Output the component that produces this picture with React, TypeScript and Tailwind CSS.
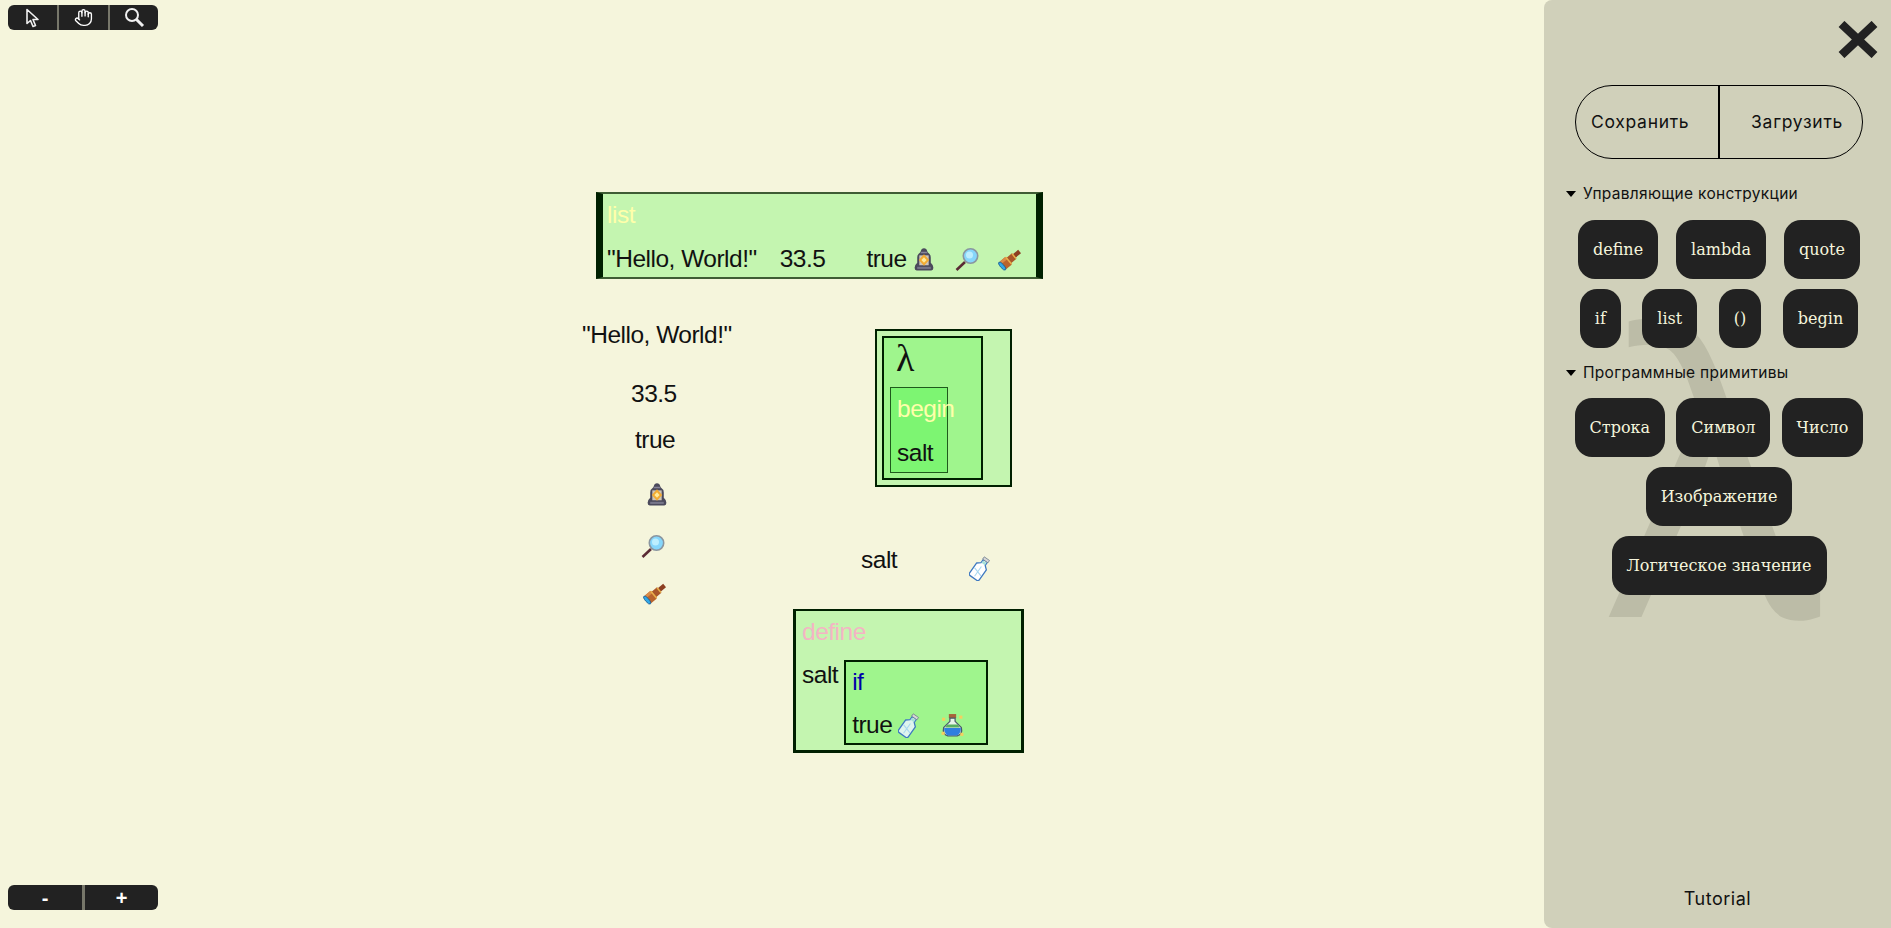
import React from "react";
import { Hand } from "lucide-react";

const sans = { fontFamily: '"Liberation Sans", Arial, sans-serif' };

function Lantern({ className = "" }: { className?: string }) {
  return (
    <svg className={className} width="20" height="24" viewBox="0 0 19 23">
      <path d="M7 2.500Q9.500 0 12 2.500l1 2.500q3 2 3 5v5q2.500 2 2.500 5 0 2.500-2 2.500h-14q-2 0-2-2.500 0-3 2.500-5v-5q0-3 3-5z" fill="#4b4a5c" />
      <path d="M7 4.500h5l.8 1.500h-6.600z" fill="#86859a" />
      <path d="M5 8h9v9.500H5z" fill="#cfc6b8" />
      <path d="M9.500 7l5 5.500-5 5.500-5-5.500z" fill="#f2ab32" />
      <path d="M9.500 9.800l2.500 2.700-2.500 2.700-2.500-2.700z" fill="#ffeb9c" />
      <rect x="3" y="19" width="13" height="2" fill="#77768a" />
    </svg>
  );
}

function Magnifier({ className = "" }: { className?: string }) {
  return (
    <svg className={className} width="24" height="23" viewBox="0 0 24 23">
      <path d="M10 14L1.500 22" stroke="#5a2a34" strokeWidth="2.500" />
      <circle cx="15.500" cy="8" r="7.200" fill="#86d6fb" stroke="#8a96a0" strokeWidth="1.600" />
      <circle cx="14.500" cy="7" r="3.500" fill="#bdeefe" />
    </svg>
  );
}

function Telescope({ className = "" }: { className?: string }) {
  return (
    <svg className={className} width="24" height="23" viewBox="0 0 24 23">
      <g transform="rotate(-40 12 11.500)">
        <rect x="17.500" y="9.300" width="7" height="4.400" fill="#8c3f22" />
        <rect x="10.500" y="8" width="7" height="7" fill="#a9562a" />
        <rect x="2.500" y="6.500" width="8" height="10" rx="1" fill="#b9642d" />
        <rect x="2.500" y="6.500" width="8" height="3" fill="#d88a48" />
        <rect x="9.500" y="7" width="1.500" height="9" fill="#e9b04a" />
        <rect x="16.500" y="8.500" width="1.500" height="6" fill="#e9b04a" />
        <ellipse cx="1.800" cy="11.500" rx="1.800" ry="5" fill="#2fa8e8" stroke="#1d5a90" strokeWidth="0.800" />
      </g>
    </svg>
  );
}

function Bottle({ className = "", tint = "#ffffff" }: { className?: string; tint?: string }) {
  return (
    <svg className={className} width="22" height="25" viewBox="0 0 22 25">
      <g transform="rotate(35 11 12.500)">
        <path d="M8.500 3h5v4l3.500 3v12q0 2-2 2H7q-2 0-2-2V10l3.500-3z" fill={tint} stroke="#3d78c0" strokeWidth="1.300" strokeLinejoin="round" />
        <rect x="7.800" y="0.500" width="6.400" height="2.800" fill="#d8d8d8" stroke="#6a7a8a" strokeWidth="0.700" />
        <path d="M6 15l10 3M11 10v12" stroke="#a9d8f0" strokeWidth="1.100" fill="none" />
        <path d="M9 4h4v3H9z" fill="#a8e0d8" />
      </g>
    </svg>
  );
}

function Potion({ className = "" }: { className?: string }) {
  return (
    <svg className={className} width="23" height="25" viewBox="0 0 21 24">
      <rect x="7" y="1" width="7" height="4" fill="#a8623a" />
      <path d="M8 5h5v3l6 6q1.500 6-4 8H6q-5.500-2-4-8l6-6z" fill="#e8f4e8" stroke="#4a5a6a" strokeWidth="1.200" />
      <path d="M2.500 14.500h16q.5 5-3.500 7H6q-4-2-3.500-7z" fill="#2f7fe0" />
      <path d="M5.500 11h10l2 3h-14z" fill="#58b060" />
      <rect x="0.500" y="4.500" width="3" height="3" fill="#f4d060" />
      <rect x="17" y="2.500" width="3" height="3" fill="#f4d060" />
      <rect x="0" y="18" width="3" height="3" fill="#f4d060" />
      <rect x="18" y="19" width="3" height="3" fill="#f4d060" />
    </svg>
  );
}

function Txt({ children, className = "" }: { children: React.ReactNode; className?: string }) {
  return (
    <div className={"text-[24.5px] tracking-[-0.5px] leading-[28px] whitespace-nowrap text-[#111] " + className} style={sans}>
      {children}
    </div>
  );
}

function Btn({ children }: { children: React.ReactNode }) {
  return (
    <button className="h-[59px] px-[15px] rounded-[17px] bg-[#222222] text-[#f5f5dc] text-[16px] font-['DejaVu_Serif',serif] whitespace-nowrap">
      {children}
    </button>
  );
}

function Header({ children, className = "" }: { children: React.ReactNode; className?: string }) {
  return (
    <div className={"flex items-center h-[24px] ml-[-9px] text-[15.5px] tracking-[0.3px] text-[#111] font-['Inter',sans-serif] " + className}>
      <span className="w-0 h-0 mr-[7px] border-x-[5.5px] border-x-transparent border-t-[6px] border-t-black" />
      {children}
    </div>
  );
}

export default function App() {
  return (
    <div className="flex h-screen w-full overflow-hidden bg-[#f5f5dc]">
      <main className="relative flex-1">
        <div className="absolute left-[8px] top-[5px] flex h-[25px] w-[150px] overflow-hidden rounded-[6px] bg-[#222222] text-white">
          <div className="flex w-[49px] items-center justify-center">
            <svg width="15" height="20" viewBox="0 0 15 20" fill="none">
              <path d="M2 1.500v14l3.500-3 2.500 6 2.500-1-2.500-6h5z" fill="#222" stroke="#f0f0f0" strokeWidth="1.600" strokeLinejoin="round" />
            </svg>
          </div>
          <div className="flex w-[53px] items-center justify-center border-x-2 border-[#77776a]">
            <Hand size={19} strokeWidth={1.7} />
          </div>
          <div className="flex flex-1 items-center justify-center">
            <svg width="21" height="21" viewBox="0 0 21 21" fill="none">
              <circle cx="8" cy="8" r="6" stroke="#f0f0f0" strokeWidth="2" />
              <path d="M12.500 12.500L19 19" stroke="#f0f0f0" strokeWidth="3" />
            </svg>
          </div>
        </div>

        <div className="absolute left-[596px] top-[192px] h-[87px] w-[447px] border-y-2 border-x-[7px] border-y-[#3f5c34] border-x-[#002000] bg-[#c4f5b0] pl-[4px] pt-[7px]">
          <Txt className="!text-[#ffffaa]">list</Txt>
          <div className="mt-[16px] flex items-center">
            <Txt>"Hello, World!"</Txt>
            <Txt className="ml-[23px]">33.5</Txt>
            <Txt className="ml-[41px]">true</Txt>
            <Lantern className="ml-[7px]" />
            <Magnifier className="ml-[21px]" />
            <Telescope className="ml-[19px]" />
          </div>
        </div>

        <Txt className="absolute left-[582px] top-[321px]">"Hello, World!"</Txt>
        <Txt className="absolute left-[631px] top-[380px]">33.5</Txt>
        <Txt className="absolute left-[635px] top-[426px]">true</Txt>
        <Lantern className="absolute left-[647px] top-[482px]" />
        <Magnifier className="absolute left-[641px] top-[535px]" />
        <Telescope className="absolute left-[643px] top-[582px]" />

        <div className="absolute left-[875px] top-[329px] h-[158px] w-[137px] border-2 border-[#002000] bg-[#c4f5b0] pl-[5px] pt-[5px]">
          <div className="h-[144px] w-[101px] border-2 border-[#002000] bg-[#9ff58d] pl-[6px]">
            <div className="flex h-[49px] items-center pb-[9px] pl-[6px] text-[38px] leading-none text-[#111] font-['Liberation_Serif',serif]">λ</div>
            <div className="h-[86px] w-[58px] border border-[#1f5a1c] bg-[#7df572] pl-[6px] pt-[7px]">
              <Txt className="!text-[#ffffaa]">begin</Txt>
              <Txt className="mt-[16px]">salt</Txt>
            </div>
          </div>
        </div>

        <Txt className="absolute left-[861px] top-[546px]">salt</Txt>
        <Bottle className="absolute left-[969px] top-[556px]" />

        <div className="absolute left-[793px] top-[609px] h-[144px] w-[231px] border-x-[3px] border-t-2 border-b-[3px] border-[#002000] bg-[#c4f5b0] pl-[6px] pt-[7px]">
          <Txt className="!text-[#f4b4c4]">define</Txt>
          <div className="mt-[14px] flex items-start">
            <Txt className="mt-[1px]">salt</Txt>
            <div className="ml-[6px] h-[85px] w-[144px] border-2 border-[#002000] bg-[#9ff58d] pl-[6px] pt-[6px]">
              <Txt className="!text-[#0000aa]">if</Txt>
              <div className="mt-[15px] flex items-center">
                <Txt>true</Txt>
                <Bottle className="ml-[6px]" tint="#dff5ee" />
                <Potion className="ml-[21px]" />
              </div>
            </div>
          </div>
        </div>

        <div className="absolute left-[8px] top-[885px] flex h-[25px] w-[150px] overflow-hidden rounded-[6px] bg-[#222222] text-white font-['Liberation_Sans',sans-serif] text-[20px] font-bold">
          <div className="flex w-[74px] items-center justify-center">-</div>
          <div className="w-[3px] bg-[#77776a]" />
          <div className="flex flex-1 items-center justify-center">+</div>
        </div>
      </main>

      <aside className="relative flex h-full w-[347px] shrink-0 flex-col overflow-hidden rounded-l-[8px] bg-[#d0d0ba] pl-[31px]">
        <div className="pointer-events-none absolute left-[67px] top-[271px] text-[390px] font-medium leading-none text-[#bcbca7] font-['Open_Sans',sans-serif]">λ</div>

        <div className="relative flex flex-col">
          <div className="flex justify-end pr-[13px] pt-[21px]">
            <svg width="40" height="37" viewBox="0 0 40 37">
              <path d="M3.500 3L36.500 34M36.500 3L3.500 34" stroke="#222222" strokeWidth="8.500" />
            </svg>
          </div>

          <div className="mt-[27px] flex h-[74px] w-[288px] rounded-full border border-black text-[17.5px] tracking-[0.7px] text-[#111] font-['Inter',sans-serif]">
            <div className="flex w-[142px] items-center pl-[15px]">Сохранить</div>
            <div className="flex flex-1 items-center justify-end border-l-2 border-black pr-[19px]">Загрузить</div>
          </div>

          <Header className="mt-[23px]">Управляющие конструкции</Header>
          <div className="ml-[-6px] mt-[14px] flex w-[300px] flex-col gap-[10px]">
            <div className="flex justify-around">
              <Btn>define</Btn>
              <Btn>lambda</Btn>
              <Btn>quote</Btn>
            </div>
            <div className="flex justify-around">
              <Btn>if</Btn>
              <Btn>list</Btn>
              <Btn>()</Btn>
              <Btn>begin</Btn>
            </div>
          </div>

          <Header className="mt-[13px]">Программные примитивы</Header>
          <div className="ml-[-6px] mt-[13px] flex w-[300px] flex-col gap-[10px]">
            <div className="flex justify-around">
              <Btn>Строка</Btn>
              <Btn>Символ</Btn>
              <Btn>Число</Btn>
            </div>
            <div className="flex justify-around">
              <Btn>Изображение</Btn>
            </div>
            <div className="flex justify-around">
              <Btn>Логическое значение</Btn>
            </div>
          </div>
        </div>

        <div className="relative mt-auto ml-[-31px] pb-[16px] text-center text-[18px] tracking-[0.5px] text-[#111] font-['Inter',sans-serif]">
          Tutorial
        </div>
      </aside>
    </div>
  );
}
